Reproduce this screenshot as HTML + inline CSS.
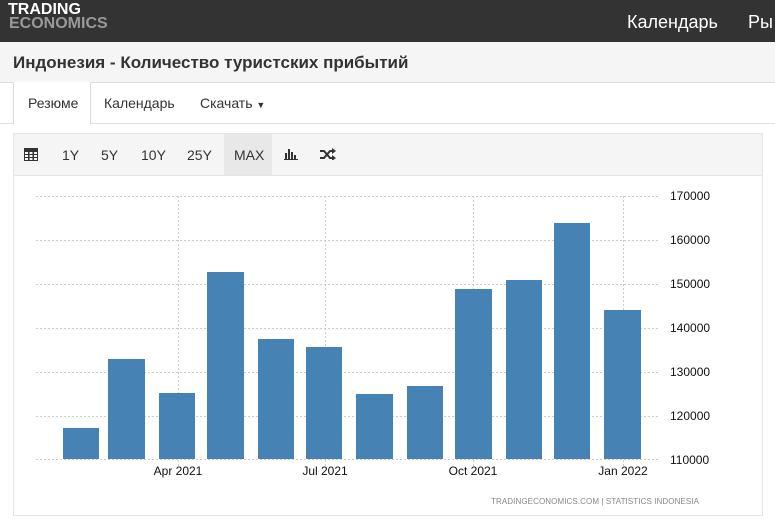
<!DOCTYPE html><html><head><meta charset="utf-8"><style>
body{margin:0;width:775px;height:519px;overflow:hidden;font-family:"Liberation Sans",Arial,sans-serif;background:#fff;position:relative}
.a{position:absolute}
</style></head><body>
<div class="a" style="left:0;top:0;width:775px;height:42px;background:#333"></div>
<div class="a" style="left:8px;top:3px;color:#fff;font-weight:bold;font-size:16px;line-height:14px">TRADING</div>
<div class="a" style="left:9px;top:17px;color:#999;font-weight:bold;font-size:16px;line-height:14px">ECONOMICS</div>
<div class="a" style="left:627px;top:12px;color:#fff;font-size:18px">Календарь</div>
<div class="a" style="left:748px;top:12px;color:#fff;font-size:18px">Ры</div>
<div class="a" style="left:0;top:42px;width:775px;height:40px;background:#f5f5f5;border-bottom:1px solid #ddd"></div>
<div class="a" style="left:13px;top:53px;font-size:17px;font-weight:bold;color:#333">Индонезия - Количество туристских прибытий</div>
<div class="a" style="left:0;top:123px;width:775px;height:1px;background:#ddd"></div>
<div class="a" style="left:13px;top:82px;width:76px;height:42px;background:#fff;border-left:1px solid #ddd;border-right:1px solid #ddd"></div>
<div class="a" style="left:28px;top:95px;font-size:14px;color:#333">Резюме</div>
<div class="a" style="left:104px;top:95px;font-size:14px;color:#333">Календарь</div>
<div class="a" style="left:200px;top:95px;font-size:14px;color:#333">Скачать <span style="font-size:9px">▼</span></div>
<div class="a" style="left:13px;top:133px;width:748px;height:381px;border:1px solid #e5e5e5"></div>
<div class="a" style="left:14px;top:134px;width:748px;height:41px;background:#f5f5f5;border-bottom:1px solid #e5e5e5"></div>
<div class="a" style="left:224px;top:134px;width:48px;height:41px;background:#e8e8e8"></div>
<svg class="a" style="left:24px;top:147px" width="14" height="14"><rect x="0" y="1" width="14" height="13" fill="#333"/><g fill="#f5f5f5"><rect x="1" y="5" width="3" height="2"/><rect x="5.5" y="5" width="3" height="2"/><rect x="10" y="5" width="3" height="2"/><rect x="1" y="8" width="3" height="2"/><rect x="5.5" y="8" width="3" height="2"/><rect x="10" y="8" width="3" height="2"/><rect x="1" y="11" width="3" height="2"/><rect x="5.5" y="11" width="3" height="2"/><rect x="10" y="11" width="3" height="2"/></g></svg>
<div class="a" style="left:62px;top:147px;font-size:14px;color:#333">1Y</div>
<div class="a" style="left:101px;top:147px;font-size:14px;color:#333">5Y</div>
<div class="a" style="left:141px;top:147px;font-size:14px;color:#333">10Y</div>
<div class="a" style="left:187px;top:147px;font-size:14px;color:#333">25Y</div>
<div class="a" style="left:234px;top:147px;font-size:14px;color:#333">MAX</div>
<svg class="a" style="left:284px;top:148px" width="14" height="12"><g fill="#333"><rect x="1" y="5" width="2" height="6"/><rect x="4" y="1" width="2" height="10"/><rect x="7" y="4" width="2" height="7"/><rect x="10" y="7" width="2" height="4"/><rect x="0" y="11" width="14" height="1"/></g></svg>
<svg class="a" style="left:320px;top:148px" width="16" height="12"><g stroke="#333" stroke-width="2" fill="none"><path d="M0 3h4l6 7h3M0 10h4l6-7h3"/></g><path d="M12 0l4 3-4 3zM12 7l4 3-4 3z" fill="#333"/></svg>
<svg class="a" style="left:0;top:180px" width="775" height="339" font-family="Liberation Sans, Arial, sans-serif" font-size="12">
<g stroke="#ccc" stroke-dasharray="2,2">
<path d="M36 16.5H660M36 60.5H660M36 104.5H660M36 148.5H660M36 192.5H660M36 236.5H660M36 279.5H660"/>
<path d="M178.5 16V286M325.5 16V286M473.5 16V286M623.5 16V286"/>
</g>
<g fill="#4682b4">
<rect x="63" y="248" width="36" height="31"/><rect x="108" y="179" width="37" height="100"/><rect x="159" y="213" width="36" height="66"/><rect x="207" y="92" width="37" height="187"/><rect x="258" y="159" width="36" height="120"/><rect x="306" y="167" width="36" height="112"/><rect x="356" y="214" width="37" height="65"/><rect x="407" y="206" width="36" height="73"/><rect x="455" y="109" width="37" height="170"/><rect x="506" y="100" width="36" height="179"/><rect x="554" y="43" width="36" height="236"/><rect x="604" y="130" width="37" height="149"/>
</g>
<g fill="#111"><text x="670" y="20">170000</text><text x="670" y="64">160000</text><text x="670" y="108">150000</text><text x="670" y="152">140000</text><text x="670" y="196">130000</text><text x="670" y="240">120000</text><text x="670" y="284">110000</text>
<text x="178" y="295" text-anchor="middle">Apr 2021</text><text x="325" y="295" text-anchor="middle">Jul 2021</text><text x="473" y="295" text-anchor="middle">Oct 2021</text><text x="623" y="295" text-anchor="middle">Jan 2022</text></g>
<text x="491" y="324" font-size="8" fill="#888" textLength="208">TRADINGECONOMICS.COM  |  STATISTICS INDONESIA</text>
</svg>
</body></html>
